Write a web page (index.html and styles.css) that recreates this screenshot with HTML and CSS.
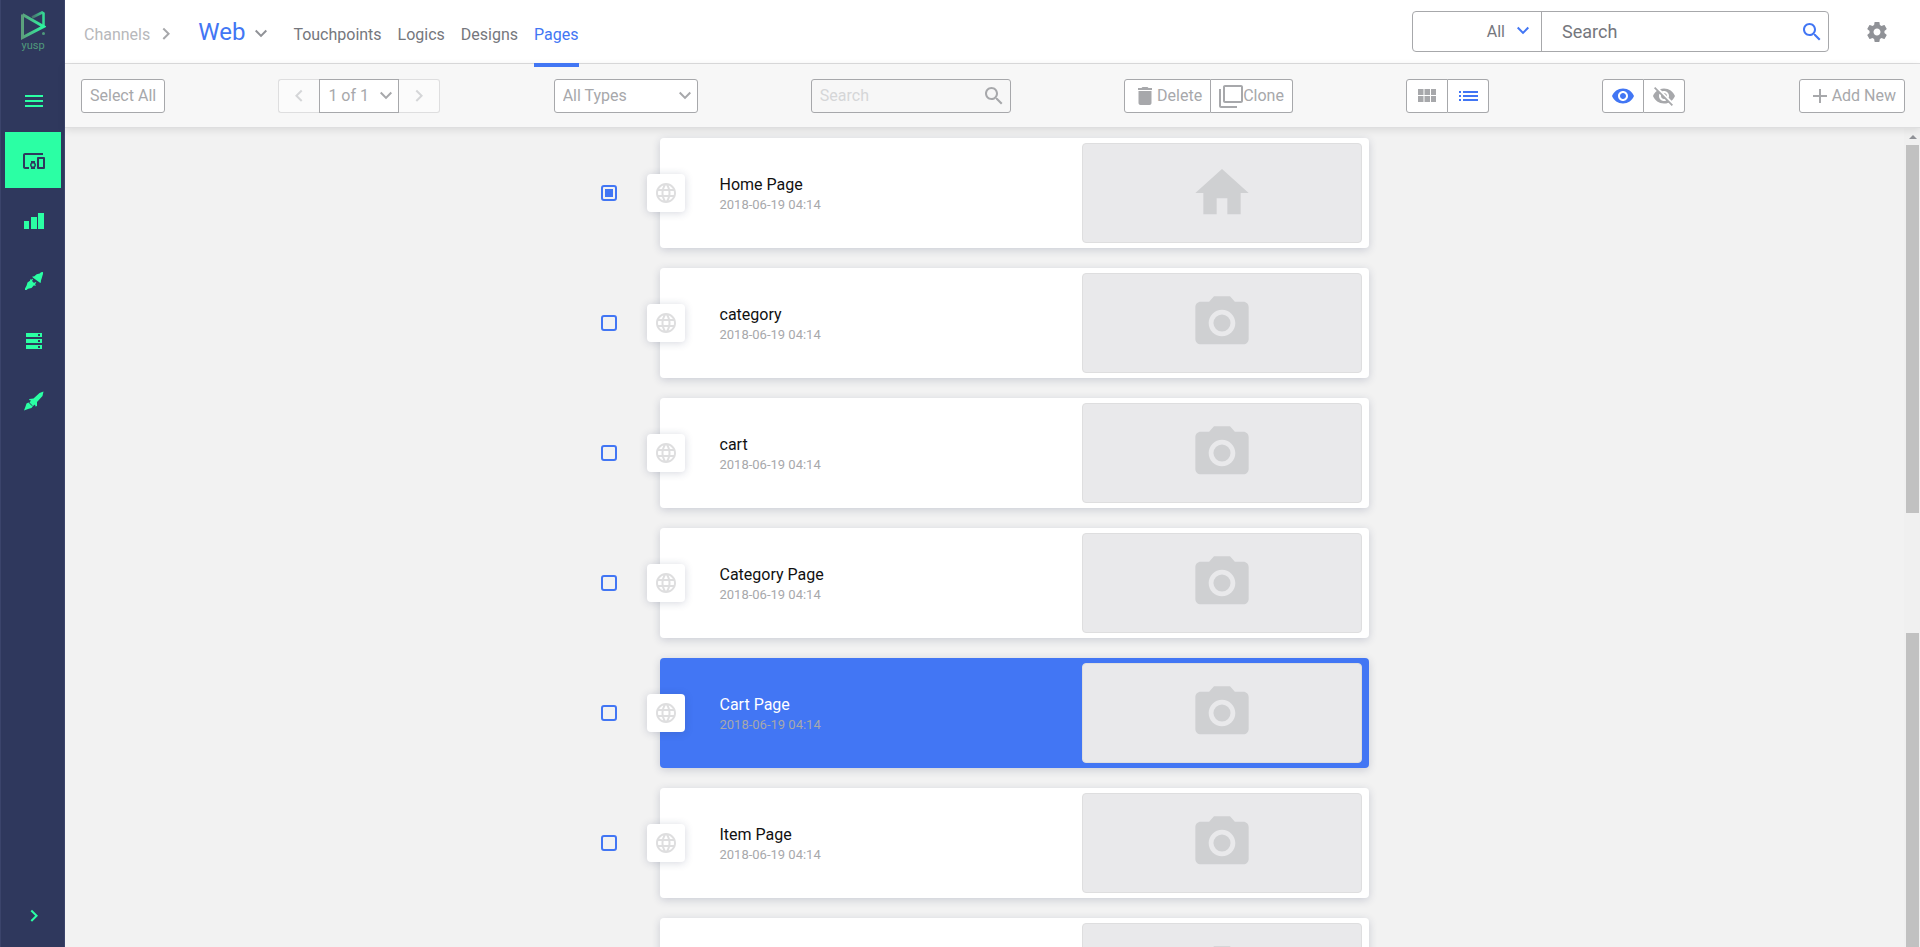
FILE: index.html
```html
<!DOCTYPE html>
<html lang="en">
<head>
  <meta charset="utf-8">
  <title>Yusp - Pages</title>
  <link rel="stylesheet" href="styles.css">
</head>
<body>
<!-- icon set -->
<svg class="sprite" aria-hidden="true">
  <symbol id="i-down" viewBox="0 0 24 24"><path d="M7.41 7.84L12 12.42l4.59-4.58L18 9.25l-6 6-6-6z"/></symbol>
  <symbol id="i-right" viewBox="0 0 24 24"><path d="M8.59 16.34l4.58-4.59-4.58-4.59L10 5.75l6 6-6 6z"/></symbol>
  <symbol id="i-left" viewBox="0 0 24 24"><path d="M15.41 16.34l-4.58-4.59 4.58-4.59L14 5.75l-6 6 6 6z"/></symbol>
  <symbol id="i-search" viewBox="0 0 24 24"><path d="M15.5 14h-.79l-.28-.27C15.41 12.59 16 11.11 16 9.5 16 5.91 13.09 3 9.5 3S3 5.91 3 9.5 5.91 16 9.5 16c1.61 0 3.09-.59 4.23-1.57l.27.28v.79l5 4.99L20.49 19l-4.99-5zm-6 0C7.01 14 5 11.99 5 9.5S7.01 5 9.5 5 14 7.01 14 9.5 11.99 14 9.5 14z"/></symbol>
  <symbol id="i-globe" viewBox="0 0 24 24"><path d="M11.99 2C6.47 2 2 6.48 2 12s4.47 10 9.99 10C17.52 22 22 17.52 22 12S17.52 2 11.99 2zm6.93 6h-2.95c-.32-1.25-.78-2.45-1.38-3.56 1.84.63 3.37 1.91 4.33 3.56zM12 4.04c.83 1.2 1.48 2.53 1.91 3.96h-3.82c.43-1.43 1.08-2.76 1.91-3.96zM4.26 14C4.1 13.36 4 12.69 4 12s.1-1.36.26-2h3.38c-.08.66-.14 1.32-.14 2 0 .68.06 1.34.14 2H4.26zm.82 2h2.95c.32 1.25.78 2.45 1.38 3.56-1.84-.63-3.37-1.9-4.33-3.56zm2.95-8H5.08c.96-1.66 2.49-2.93 4.33-3.56C8.81 5.55 8.35 6.75 8.03 8zM12 19.96c-.83-1.2-1.48-2.53-1.91-3.96h3.82c-.43 1.43-1.08 2.76-1.91 3.96zM14.34 14H9.66c-.09-.66-.16-1.32-.16-2 0-.68.07-1.35.16-2h4.68c.09.65.16 1.32.16 2 0 .68-.07 1.34-.16 2zm.25 5.56c.6-1.11 1.06-2.31 1.38-3.56h2.95c-.96 1.65-2.49 2.93-4.33 3.56zM16.36 14c.08-.66.14-1.32.14-2 0-.68-.06-1.34-.14-2h3.38c.16.64.26 1.31.26 2s-.1 1.36-.26 2h-3.38z"/></symbol>
  <symbol id="i-home" viewBox="0 0 24 24"><path d="M10 20v-6h4v6h5v-8h3L12 3 2 12h3v8z"/></symbol>
  <symbol id="i-camera" viewBox="0 0 24 24"><circle cx="12" cy="12" r="3.2"/><path d="M9 2L7.17 4H4c-1.1 0-2 .9-2 2v12c0 1.1.9 2 2 2h16c1.1 0 2-.9 2-2V6c0-1.1-.9-2-2-2h-3.17L15 2H9zm3 15c-2.76 0-5-2.24-5-5s2.24-5 5-5 5 2.24 5 5-2.24 5-5 5z"/></symbol>
</svg>

<aside class="sidebar">
  <a class="logo" href="#" aria-label="yusp">
    <svg width="26" height="31" viewBox="0 0 26 31" fill="none">
      <defs>
        <linearGradient id="g1" x1="0" y1="0" x2="1" y2="0"><stop offset="0" stop-color="#5c9f7c"/><stop offset="1" stop-color="#2bf7a0"/></linearGradient>
        <linearGradient id="g2" x1="0" y1="0" x2="1" y2="0"><stop offset="0" stop-color="#4b6b6b"/><stop offset="1" stop-color="#35d994"/></linearGradient>
      </defs>
      <path d="M12 7.500L22 2.500L23.500 3.500V17" stroke="url(#g2)" stroke-width="2.600"/>
      <path d="M2.500 4.500V27.500L23.500 16.500L2.500 4.500" stroke="url(#g1)" stroke-width="3"/>
      <circle cx="23.500" cy="23.500" r="1.500" fill="#4f9a7c"/>
    </svg>
    <span>yusp</span>
  </a>
  <nav class="side-nav">
    <a href="#" aria-label="Menu"><svg class="icon" viewBox="0 0 24 24"><path d="M3 18h18v-2H3v2zm0-5h18v-2H3v2zm0-7v2h18V6H3z"/></svg></a>
    <a href="#" class="active" aria-label="Channels"><svg class="icon" viewBox="0 0 24 24"><path d="M3 6h18V4H3c-1.100 0-2 .9-2 2v12c0 1.100.9 2 2 2h4v-2H3V6zm10 6H9v1.780c-.61.55-1 1.330-1 2.220s.39 1.670 1 2.220V20h4v-1.780c.61-.55 1-1.340 1-2.220s-.39-1.670-1-2.220V12zm-2 5.500c-.83 0-1.500-.67-1.500-1.500s.67-1.500 1.500-1.500 1.500.67 1.500 1.500-.67 1.500-1.500 1.500zM22 8h-6c-.5 0-1 .5-1 1v10c0 .5.5 1 1 1h6c.5 0 1-.5 1-1V9c0-.5-.5-1-1-1zm-1 10h-4v-8h4v8z"/></svg></a>
    <a href="#" aria-label="Statistics"><svg class="icon" viewBox="0 0 24 24"><path d="M2 12h5v8H2zM9 8h6v12H9zM16 4h6v16h-6z"/></svg></a>
    <a href="#" aria-label="Connections"><svg class="icon" viewBox="0 0 24 24"><path d="M21 3l-2 .3-1.300 1.200-3 .7-2.700 2.300-1.500-.2.200 1.200 7.300 5.300 1-.3-.2-1.500 1-3 .7-2.500L21 5zM8.300 9.700l-.3 2-2.500 1.800-1 3.200L3 19.500V21h1.500l1.500-1.300 3.500-.7 2.200-2.500 2.300.3-1-1.700 1.300-1.300-.8-.8-1.500 1-2-2 1-1.500-.8-.8-1.200 1.300z"/></svg></a>
    <a href="#" aria-label="Storage"><svg class="icon" viewBox="0 0 24 24"><path d="M4 4h16v4H4zM4 10h16v4H4zM4 16h16v4H4z"/><path class="dot" d="M16 5h2v2h-2zM16 11h2v2h-2zM16 17h2v2h-2z"/></svg></a>
    <a href="#" aria-label="Launch"><svg class="icon" viewBox="0 0 24 24"><path d="M21.500 2.500l-4 1.500-6 5.500-4 .5-.5 1 2 .5-1.500 2 3.500 3.500 2-1.500.5 2 1.500-.5v-4l5.500-6zM6.500 13.500l-2 1-1 3-1.500 4 4-1.500 3.500-1 1.500-2-1.500-.5z"/></svg></a>
  </nav>
  <a class="expand" href="#" aria-label="Expand"><svg class="icon"><use href="#i-right"/></svg></a>
</aside>

<div class="page">
  <header class="topbar">
    <nav class="crumbs">
      <a class="crumb" href="#">Channels</a>
      <svg class="icon crumb-arrow"><use href="#i-right"/></svg>
      <button class="channel">Web<svg class="icon"><use href="#i-down"/></svg></button>
    </nav>
    <nav class="tabs">
      <a href="#">Touchpoints</a>
      <a href="#">Logics</a>
      <a href="#">Designs</a>
      <a href="#" class="active">Pages</a>
    </nav>
    <div class="global-search">
      <div class="select">
        <select aria-label="Search in"><option>All</option></select>
        <svg class="icon"><use href="#i-down"/></svg>
      </div>
      <input type="text" placeholder="Search" aria-label="Search everything">
      <svg class="icon"><use href="#i-search"/></svg>
    </div>
    <button class="settings" aria-label="Settings"><svg class="icon" viewBox="0 0 24 24"><path d="M19.430 12.980c.04-.32.07-.64.07-.98s-.03-.66-.07-.98l2.110-1.650c.19-.15.24-.42.12-.64l-2-3.460c-.12-.22-.39-.3-.61-.22l-2.490 1c-.52-.4-1.080-.73-1.690-.98l-.38-2.650C14.460 2.180 14.250 2 14 2h-4c-.25 0-.46.18-.49.42l-.38 2.650c-.61.25-1.170.59-1.690.98l-2.490-1c-.23-.09-.49 0-.61.22l-2 3.460c-.13.22-.07.49.12.64l2.110 1.650c-.04.32-.07.65-.07.98s.03.66.07.98l-2.110 1.650c-.19.15-.24.42-.12.64l2 3.460c.12.22.39.3.61.22l2.490-1c.52.4 1.080.73 1.690.98l.38 2.650c.03.24.24.42.49.42h4c.25 0 .46-.18.49-.42l.38-2.650c.61-.25 1.170-.59 1.690-.98l2.490 1c.23.09.49 0 .61-.22l2-3.460c.12-.22.07-.49-.12-.64l-2.110-1.650zM12 15.500c-1.930 0-3.500-1.570-3.500-3.500s1.570-3.500 3.500-3.500 3.500 1.570 3.500 3.500-1.570 3.500-3.500 3.500z"/></svg></button>
  </header>

  <div class="toolbar">
    <button class="btn">Select All</button>
    <div class="group pager">
      <button class="btn" disabled aria-label="Previous page"><svg class="icon"><use href="#i-left"/></svg></button>
      <div class="select">
        <select aria-label="Page"><option>1 of 1</option></select>
        <svg class="icon"><use href="#i-down"/></svg>
      </div>
      <button class="btn" disabled aria-label="Next page"><svg class="icon"><use href="#i-right"/></svg></button>
    </div>
    <div class="select types">
      <select aria-label="Type"><option>All Types</option></select>
      <svg class="icon"><use href="#i-down"/></svg>
    </div>
    <div class="filter">
      <input type="text" placeholder="Search" aria-label="Search pages">
      <svg class="icon"><use href="#i-search"/></svg>
    </div>
    <div class="group">
      <button class="btn"><svg class="icon" viewBox="0 0 24 24"><path d="M5.500 19c0 1.100.9 2 2 2h9c1.100 0 2-.9 2-2V7h-13v12zM19 4h-3.500l-1-1h-5l-1 1H5v2h14V4z"/></svg>Delete</button>
      <button class="btn"><svg class="icon" viewBox="0 0 24 24"><path d="M2 5H0v17c0 1.100.9 2 2 2h16v-2H2zM22 1H6c-1.100 0-2 .9-2 2v14c0 1.100.9 2 2 2h16c1.100 0 2-.9 2-2V3c0-1.100-.9-2-2-2zm0 16H6V3h16z"/></svg>Clone</button>
    </div>
    <div class="group toggle">
      <button class="btn" aria-label="Grid view"><svg class="icon" viewBox="0 0 24 24"><path d="M3 11h5.500V5H3zM3 18h5.500v-6H3zM9.500 18H15v-6H9.500zM16 18h5v-6h-5zM9.500 11H15V5H9.500zM16 5v6h5V5z"/></svg></button>
      <button class="btn on" aria-label="List view"><svg class="icon" viewBox="0 0 24 24"><path d="M3 13h2v-2H3zM3 17h2v-2H3zM3 9h2V7H3zM7 13h15v-2H7zM7 17h15v-2H7zM7 7v2h15V7z"/></svg></button>
    </div>
    <div class="group toggle">
      <button class="btn on" aria-label="Show visible"><svg class="icon" viewBox="0 0 24 24"><path d="M12 4.500C7 4.500 2.730 7.610 1 12c1.730 4.390 6 7.500 11 7.500s9.270-3.110 11-7.500c-1.730-4.390-6-7.500-11-7.500zM12 17c-2.760 0-5-2.240-5-5s2.240-5 5-5 5 2.240 5 5-2.240 5-5 5zm0-8c-1.660 0-3 1.340-3 3s1.340 3 3 3 3-1.340 3-3-1.340-3-3-3z"/></svg></button>
      <button class="btn" aria-label="Show hidden"><svg class="icon" viewBox="0 0 24 24"><path d="M12 7c2.760 0 5 2.240 5 5 0 .65-.13 1.260-.36 1.830l2.920 2.920c1.510-1.260 2.700-2.890 3.430-4.750-1.730-4.390-6-7.500-11-7.500-1.400 0-2.740.25-3.980.7l2.160 2.160C10.740 7.130 11.350 7 12 7zM2 4.270l2.280 2.280.46.46C3.080 8.300 1.780 10.020 1 12c1.730 4.390 6 7.500 11 7.500 1.550 0 3.030-.3 4.380-.84l.42.42L19.730 22 21 20.730 3.270 3 2 4.270zM7.530 9.800l1.550 1.550c-.05.21-.08.43-.08.65 0 1.660 1.340 3 3 3 .22 0 .44-.03.65-.08l1.550 1.550c-.67.33-1.410.53-2.200.53-2.760 0-5-2.240-5-5 0-.79.2-1.530.53-2.200zm4.310-.78l3.150 3.150.02-.16c0-1.660-1.340-3-3-3l-.17.01z"/></svg></button>
    </div>
    <button class="btn"><svg class="icon" viewBox="0 0 24 24"><path d="M19 13h-6v6h-2v-6H5v-2h6V5h2v6h6z"/></svg>Add New</button>
  </div>

  <main class="content">
    <ul class="list">
      <li class="row">
        <input type="checkbox" id="p1" checked>
        <article class="card">
          <span class="kind"><svg class="icon"><use href="#i-globe"/></svg></span>
          <div class="info"><label for="p1">Home Page</label><time>2018-06-19 04:14</time></div>
          <div class="thumb"><svg><use href="#i-home"/></svg></div>
        </article>
      </li>
      <li class="row">
        <input type="checkbox" id="p2">
        <article class="card">
          <span class="kind"><svg class="icon"><use href="#i-globe"/></svg></span>
          <div class="info"><label for="p2">category</label><time>2018-06-19 04:14</time></div>
          <div class="thumb"><svg><use href="#i-camera"/></svg></div>
        </article>
      </li>
      <li class="row">
        <input type="checkbox" id="p3">
        <article class="card">
          <span class="kind"><svg class="icon"><use href="#i-globe"/></svg></span>
          <div class="info"><label for="p3">cart</label><time>2018-06-19 04:14</time></div>
          <div class="thumb"><svg><use href="#i-camera"/></svg></div>
        </article>
      </li>
      <li class="row">
        <input type="checkbox" id="p4">
        <article class="card">
          <span class="kind"><svg class="icon"><use href="#i-globe"/></svg></span>
          <div class="info"><label for="p4">Category Page</label><time>2018-06-19 04:14</time></div>
          <div class="thumb"><svg><use href="#i-camera"/></svg></div>
        </article>
      </li>
      <li class="row">
        <input type="checkbox" id="p5">
        <article class="card selected">
          <span class="kind"><svg class="icon"><use href="#i-globe"/></svg></span>
          <div class="info"><label for="p5">Cart Page</label><time>2018-06-19 04:14</time></div>
          <div class="thumb"><svg><use href="#i-camera"/></svg></div>
        </article>
      </li>
      <li class="row">
        <input type="checkbox" id="p6">
        <article class="card">
          <span class="kind"><svg class="icon"><use href="#i-globe"/></svg></span>
          <div class="info"><label for="p6">Item Page</label><time>2018-06-19 04:14</time></div>
          <div class="thumb"><svg><use href="#i-camera"/></svg></div>
        </article>
      </li>
      <li class="row">
        <input type="checkbox" id="p7" aria-label="Page">
        <article class="card">
          <span class="kind"><svg class="icon"><use href="#i-globe"/></svg></span>
          <div class="info"></div>
          <div class="thumb"><svg><use href="#i-camera"/></svg></div>
        </article>
      </li>
    </ul>
    <div class="scrollbar" aria-hidden="true">
      <span class="scroll-up"></span>
      <span class="scroll-thumb"></span>
      <span class="scroll-gap"></span>
      <span class="scroll-thumb"></span>
    </div>
  </main>
</div>
</body>
</html>
```
FILE: styles.css
```css
* {
  box-sizing: border-box;
}
body {
  margin: 0;
  height: 100vh;
  display: flex;
  overflow: hidden;
  background: #f2f2f2;
  font-family: Roboto, sans-serif;
  font-size: 16px;
  color: #a7a8ab;
}
a {
  color: inherit;
  text-decoration: none;
}
button, input, select {
  font: inherit;
  color: inherit;
  margin: 0;
  outline: 0;
}
button {
  cursor: pointer;
}
.sprite {
  position: absolute;
  width: 0;
  height: 0;
}
.icon {
  width: 24px;
  height: 24px;
  flex: none;
  fill: currentColor;
}

/* sidebar */
.sidebar {
  width: 65px;
  flex: none;
  display: flex;
  flex-direction: column;
  padding: 0 3px 0 4px;
  background: #2f385d;
  border: 1px solid #3b446b;
  border-width: 0 1px;
  color: #2bffa4;
}
.logo {
  display: flex;
  flex-direction: column;
  align-items: center;
  height: 72px;
  padding-top: 10px;
  font-size: 11px;
  line-height: 10px;
  color: #4f9a7c;
}
.side-nav {
  display: flex;
  flex-direction: column;
  gap: 4px;
}
.side-nav a {
  display: flex;
  align-items: center;
  justify-content: center;
  height: 56px;
  padding: 2px 0 0 2px;
}
.side-nav .active {
  background: #2bffa4;
  color: #2f385d;
}
.side-nav .dot {
  fill: #2f385d;
}
.expand {
  margin: auto auto 19px;
  padding-left: 2px;
}
.expand .icon {
  display: block;
}

/* top bar */
.page {
  flex: 1;
  min-width: 0;
  display: flex;
  flex-direction: column;
}
.topbar {
  height: 64px;
  flex: none;
  display: flex;
  align-items: center;
  padding: 0 31px 0 19px;
  background: #fff;
  border-bottom: 1px solid #dededf;
}
.crumbs {
  display: flex;
  align-items: center;
}
.crumb {
  color: #b7b8bb;
  padding-top: 5px;
}
.crumb-arrow {
  margin: 5px 20px 0 4px;
}
.channel {
  display: flex;
  align-items: center;
  padding: 0;
  border: 0;
  background: none;
  color: #4276f4;
  font-size: 24px;
}
.channel .icon {
  margin: 4px 0 0 4px;
  color: #909297;
}
.tabs {
  display: flex;
  align-self: stretch;
  gap: 16px;
  margin-left: 20px;
  color: #75777d;
}
.tabs a {
  height: 67px;
  line-height: 19px;
  padding-top: 25px;
}
.tabs .active {
  position: relative;
  z-index: 1;
  color: #4276f4;
  border-bottom: 4px solid #4276f4;
}
.global-search {
  display: flex;
  align-items: center;
  width: 417px;
  height: 41px;
  margin-left: auto;
  padding-right: 4px;
  border: 1px solid #a7a8ab;
  border-radius: 4px;
  color: #4276f4;
}
.global-search input {
  flex: 1;
  min-width: 0;
  padding: 0 20px;
  border: 0;
  background: none;
  font-size: 18px;
  color: #75777d;
}
.global-search ::placeholder {
  color: #75777d;
}
.settings {
  display: flex;
  margin-left: 36px;
  padding: 0;
  border: 0;
  background: none;
  color: #909297;
}

/* select with its own arrow */
.select {
  position: relative;
  height: 34px;
  background: #fff;
  border: 1px solid #a7a8ab;
}
.select select {
  width: 100%;
  height: 100%;
  padding: 0 8px;
  border: 0;
  background: none;
  appearance: none;
}
.select .icon {
  position: absolute;
  right: 0;
  top: 4px;
  pointer-events: none;
}
.global-search .select {
  width: 129px;
  height: 39px;
  border-width: 0 1px 0 0;
  background: none;
}
.global-search select {
  padding-right: 36px;
  text-align: right;
  text-align-last: right;
  color: #75777d;
}
.global-search .select .icon {
  right: 6px;
  top: 7px;
}

/* toolbar */
.toolbar {
  position: relative;
  height: 64px;
  flex: none;
  display: flex;
  align-items: center;
  justify-content: space-between;
  padding: 0 15px 0 16px;
  background: #f7f7f7;
  border-bottom: 1px solid #dededf;
  box-shadow: 0 2px 8px rgba(0,0,0,0.1);
}
.btn {
  display: flex;
  align-items: center;
  justify-content: center;
  height: 34px;
  padding: 0 8px;
  background: #fff;
  border: 1px solid #a7a8ab;
  border-radius: 3px;
}
.group {
  display: flex;
}
.group .btn:first-child {
  border-radius: 3px 0 0 3px;
}
.group .btn:last-child {
  border-left: 0;
  border-radius: 0 3px 3px 0;
}
.toggle .btn, .pager .btn {
  width: 41px;
}
.toggle .btn:first-child {
  width: 42px;
}
.toggle .on {
  color: #4276f4;
}
.pager .btn {
  background: #fbfbfb;
  border-color: #dededf;
  color: #d5d6d8;
}
.pager .btn:first-child {
  border-right: 0;
}
.pager .select {
  width: 80px;
}
.types {
  width: 144px;
  border-radius: 3px;
}
.filter {
  display: flex;
  align-items: center;
  width: 200px;
  height: 34px;
  padding-right: 4px;
  border: 1px solid #a7a8ab;
  border-radius: 3px;
}
.filter input {
  flex: 1;
  min-width: 0;
  padding: 0 8px;
  border: 0;
  background: none;
}
.filter ::placeholder {
  color: #d5d6d8;
}

/* page list */
.content {
  flex: 1;
  min-height: 0;
  display: flex;
}
.list {
  flex: 1;
  display: flex;
  flex-direction: column;
  align-items: center;
  gap: 20px;
  margin: 0;
  padding: 10px 0 0;
  overflow: hidden;
  list-style: none;
}
.row {
  flex: none;
  display: flex;
  align-items: center;
  gap: 43px;
  width: 768px;
}
.row input {
  appearance: none;
  flex: none;
  width: 16px;
  height: 16px;
  padding: 2px;
  border: 2px solid #4276f4;
  border-radius: 3px;
}
.row input:checked::before {
  content: "";
  display: block;
  height: 8px;
  background: #4276f4;
}
.card {
  position: relative;
  flex: 1;
  display: flex;
  align-items: center;
  height: 110px;
  padding: 5px 7px 5px 60px;
  background: #fff;
  border-radius: 4px;
  box-shadow: 0 2px 8px rgba(47,56,93,0.2);
}
.kind {
  position: absolute;
  left: -13px;
  top: 36px;
  display: flex;
  align-items: center;
  justify-content: center;
  width: 38px;
  height: 38px;
  background: #fff;
  border-radius: 4px;
  box-shadow: 0 1px 8px rgba(47,56,93,0.2);
  color: #dededf;
}
.info {
  flex: 1;
  display: flex;
  flex-direction: column;
  gap: 2px;
  padding-top: 2px;
}
.info label {
  line-height: 20px;
  color: #111;
}
.info time {
  font-size: 13px;
  line-height: 16px;
}
.thumb {
  display: flex;
  align-items: center;
  justify-content: center;
  width: 280px;
  height: 100px;
  background: #e9e9eb;
  border: 1px solid #dededf;
  border-radius: 4px;
}
.thumb svg {
  width: 64px;
  height: 64px;
  fill: #cfd0d2;
}
.selected {
  background: #4276f4;
}
.selected label {
  color: #fff;
}

/* scrollbar */
.scrollbar {
  width: 16px;
  display: flex;
  flex-direction: column;
  padding: 0 1px 0 2px;
  background: #f0f0f0;
}
.scroll-up {
  height: 17px;
  flex: none;
  display: flex;
  align-items: center;
  justify-content: center;
}
.scroll-up::before {
  content: "";
  border: 4px solid transparent;
  border-top: 0;
  border-bottom-color: #909297;
}
.scroll-thumb {
  flex: 368;
  background: #c1c1c1;
}
.scroll-gap {
  flex: 120;
}
.scroll-thumb:last-child {
  flex: 314;
}
```
